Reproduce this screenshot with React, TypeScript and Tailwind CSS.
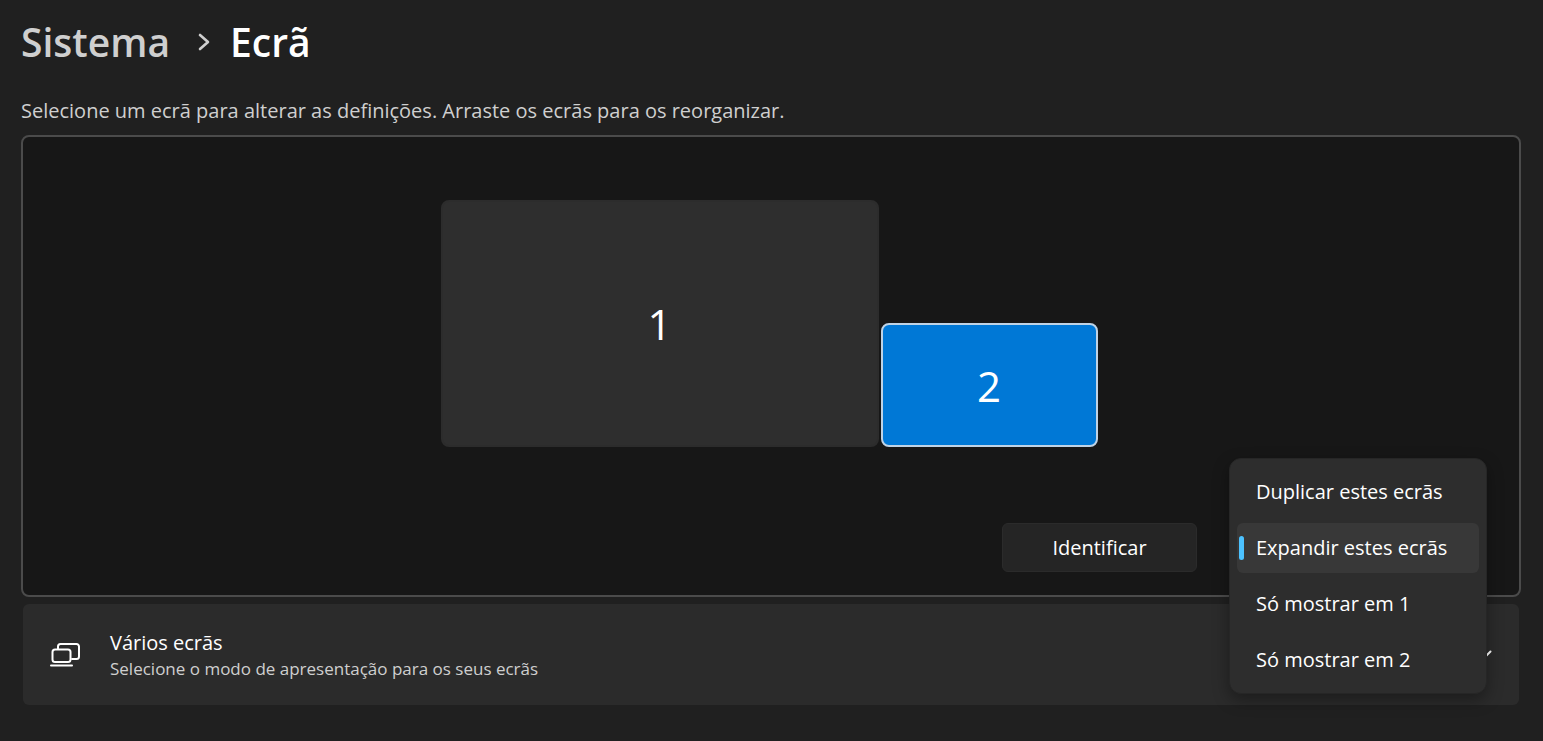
import { useState } from "react";

const MODES = [
  { id: "duplicate", label: "Duplicar estes ecrãs" },
  { id: "extend",    label: "Expandir estes ecrãs" },
  { id: "only1",     label: "Só mostrar em 1" },
  { id: "only2",     label: "Só mostrar em 2" },
];

const DISPLAYS = [
  { id: 1, size: "h-[247px] w-[438px]" },
  { id: 2, size: "h-[124px] w-[217px]" },
];

function ScreensIcon() {
  return (
    <svg viewBox="0 0 30 24" fill="none" stroke="currentColor" strokeWidth="2" strokeLinecap="round" strokeLinejoin="round" className="h-6 w-[30px] shrink-0" aria-hidden="true">
      <path d="M8 5.500V3.500a2.500 2.500 0 0 1 2.500-2.500h16a2.500 2.500 0 0 1 2.500 2.500v10a2.500 2.500 0 0 1-2.500 2.500H22" />
      <rect x="2.5" y="6.5" width="18" height="12.5" rx="2.5" />
      <path d="M1 22.500h21" />
    </svg>
  );
}

export default function App() {
  const [mode, setMode] = useState("extend");
  const [selected, setSelected] = useState(2);
  const current = MODES.find((m) => m.id === mode)!;

  return (
    <div className="min-h-screen bg-[#202020] pr-[22px] pb-9 pl-[21px] font-['Open_Sans',sans-serif] text-white">

      {/* Breadcrumb */}
      <nav className="flex items-center pt-3 text-[39px] leading-[60px] font-semibold">
        <a href="#sistema" className="text-[#cfcfcf]">Sistema</a>
        <svg viewBox="0 0 12 18" fill="none" stroke="#cfcfcf" strokeWidth="2.6" strokeLinecap="round" strokeLinejoin="round" className="mr-5 ml-7 h-[18px] w-3" aria-hidden="true">
          <path d="M2 2l8 7-8 7" />
        </svg>
        <h1>Ecrã</h1>
      </nav>

      <p className="mt-6 text-[20px] leading-[30px] text-[#cfcfcf]">
        Selecione um ecrã para alterar as definições. Arraste os ecrãs para os reorganizar.
      </p>

      {/* Display arrangement */}
      <section className="mt-[9px] rounded-lg border-2 border-[#4b4b4b] bg-[#171717] pt-[63px] pr-8 pb-[23px] pl-7">
        <div className="flex items-end justify-center gap-[2px]">
          {DISPLAYS.map((d) => (
            <button
              key={d.id}
              onClick={() => setSelected(d.id)}
              className={`flex items-center justify-center rounded-lg border-2 text-[42px] ${d.size} ${
                selected === d.id ? "border-[#bfd3e6] bg-[#0078d6]" : "border-[#2c2c2c] bg-[#2e2e2e]"
              }`}
            >
              {d.id}
            </button>
          ))}
        </div>

        <div className="mt-[76px] flex justify-end gap-8">
          <button className="h-[49px] w-[195px] rounded-md border border-[#2b2b2b] bg-[#252525] text-[20px]">
            Identificar
          </button>

          <div className="relative">
            <button aria-haspopup="listbox" aria-expanded="true" aria-label={current.label} className="block h-[49px] w-[258px] rounded-md border border-[#2b2b2b] bg-[#252525]" />

            {/* Open list, the selected mode lies over the box */}
            <ul role="listbox" className="absolute -top-[65px] left-0 z-10 flex w-[258px] flex-col gap-[6px] rounded-xl border border-[#262626] bg-[#2d2d2d] px-[7px] py-2 shadow-[0_6px_16px_rgba(0,0,0,0.35)]">
              {MODES.map((m) => (
                <li key={m.id} role="option" aria-selected={mode === m.id}>
                  <button
                    onClick={() => setMode(m.id)}
                    className={`flex h-[50px] w-full items-center rounded-md pl-[2px] text-left text-[20px] ${mode === m.id ? "bg-[#383838]" : ""}`}
                  >
                    <span className={`mr-3 h-6 w-[5px] rounded-full ${mode === m.id ? "bg-[#4cc2ff]" : ""}`} />
                    {m.label}
                  </button>
                </li>
              ))}
            </ul>
          </div>
        </div>
      </section>

      {/* Multiple displays */}
      <div className="px-[2px]">
        <button className="mt-[7px] flex h-[101px] w-full items-center rounded-md bg-[#2b2b2b] px-[27px] text-left">
          <ScreensIcon />
          <span className="ml-[30px] flex-1">
            <span className="block text-[20px] leading-7">Vários ecrãs</span>
            <span className="block text-[17px] leading-6 text-[#cfcfcf]">Selecione o modo de apresentação para os seus ecrãs</span>
          </span>
          <svg viewBox="0 0 16 10" fill="none" stroke="currentColor" strokeWidth="2" strokeLinecap="round" strokeLinejoin="round" className="h-[10px] w-4" aria-hidden="true">
            <path d="M1.500 1.500L8 8l6.500-6.500" />
          </svg>
        </button>
      </div>
    </div>
  );
}
